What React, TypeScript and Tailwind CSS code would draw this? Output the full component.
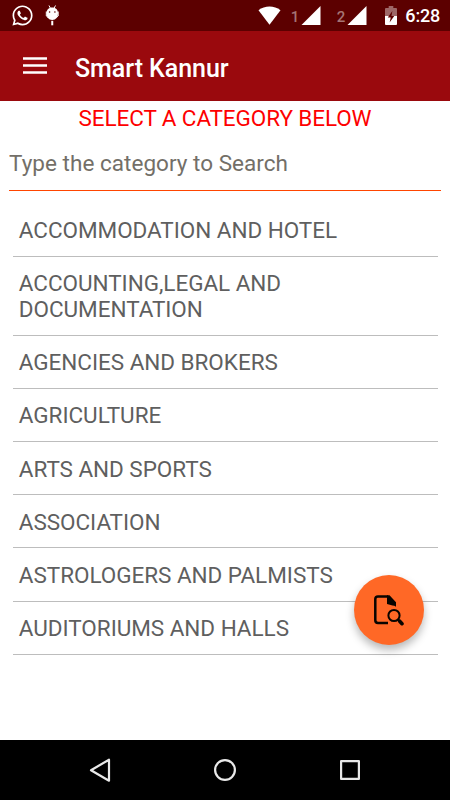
import React, { useState } from 'react';
import { FaWhatsapp } from 'react-icons/fa';

const CATEGORIES = [
  'ACCOMMODATION AND HOTEL',
  'ACCOUNTING,LEGAL AND DOCUMENTATION',
  'AGENCIES AND BROKERS',
  'AGRICULTURE',
  'ARTS AND SPORTS',
  'ASSOCIATION',
  'ASTROLOGERS AND PALMISTS',
  'AUDITORIUMS AND HALLS',
];

function SignalIcon({ sim }: { sim: number }) {
  return (
    <div className="flex h-[19px] items-end">
      <span className="mr-[2px] text-[15px] leading-[16px] font-medium text-[#a57474]">{sim}</span>
      <svg width="20" height="19" viewBox="0 0 20 19" fill="#fff">
        <path d="M19.500 0v19H.5z" />
      </svg>
    </div>
  );
}

function StatusBar() {
  return (
    <div className="flex h-[31px] shrink-0 items-start bg-[#5c0000] text-white">
      <FaWhatsapp className="mt-[4px] ml-[11px] h-[23px] w-[23px]" />
      {/* Debug bug */}
      <svg className="mt-[5px] ml-[11px]" width="16" height="21" viewBox="0 0 16 21">
        <path d="M4 .5l1.300 2.500M10.500 .5L9.200 3" stroke="#fff" strokeWidth="1" fill="none" />
        <path d="M1.300 6.500v4.500l1.700 1.500M13.200 6.500v4.500l-1.700 1.500" stroke="#fff" strokeWidth="1" fill="none" />
        <path d="M1.500 8C1.800 .8 12.700 .8 13 8Q13 14.500 7.250 15Q1.500 14.500 1.500 8z" fill="#fff" />
        <path d="M7.250 15.800v4.500" stroke="#fff" strokeWidth="2" />
        <circle cx="4.600" cy="7" r=".8" fill="#5c0000" />
        <circle cx="9.900" cy="7" r=".8" fill="#5c0000" />
      </svg>
      <div className="mt-[6px] ml-auto flex items-start">
        <svg width="23" height="19" viewBox="0 0 23 19" fill="#fff">
          <path d="M.5 4.200C6.800-.7 16.200-.7 22.500 4.200L11.500 18.700z" />
        </svg>
        <div className="ml-[9.500px]"><SignalIcon sim={1} /></div>
        <div className="ml-[15.500px]"><SignalIcon sim={2} /></div>
        <svg className="ml-[18px]" width="12" height="19" viewBox="0 0 13 19" preserveAspectRatio="none">
          <path d="M4 0h5v2h3q1 0 1 1v8H0V3q0-1 1-1h3z" fill="#9d6666" />
          <path d="M0 10h13v8q0 1-1 1H1q-1 0-1-1z" fill="#fff" />
          <path d="M8 5L3 11.500h3.200L5 16.500l5-6.500H7z" fill="#5c0000" />
        </svg>
        <span className="mr-[10px] ml-[8px] text-[18px] leading-[20px] font-medium tracking-[-0.2px]">6:28</span>
      </div>
    </div>
  );
}

function Toolbar() {
  return (
    <header className="flex h-[70px] shrink-0 items-center bg-[#9a090d] text-white">
      <button type="button" aria-label="Menu" className="-mt-[1px] ml-[23px]">
        <svg className="block" width="24" height="17" viewBox="0 0 24 17" fill="#fff">
          <path d="M0 .2h24v2.500H0zM0 7.200h24v2.500H0zM0 14.200h24v2.500H0z" />
        </svg>
      </button>
      <h1 className="mt-[5px] ml-[28px] text-[25px] leading-[30px] font-medium tracking-[-0.05px]">Smart Kannur</h1>
    </header>
  );
}

function NavBar() {
  return (
    <nav className="flex h-[60px] shrink-0 items-center justify-between bg-black px-[87px]">
      <svg width="25" height="26" viewBox="0 0 25 26" fill="none" stroke="#e9e9e9" strokeWidth="2.200" strokeLinejoin="round">
        <path d="M22 2.700v21L4 13.200z" />
      </svg>
      <svg width="24" height="24" viewBox="0 0 24 24" fill="none" stroke="#e9e9e9" strokeWidth="2.200">
        <circle cx="12" cy="12" r="9.900" />
      </svg>
      <svg width="26" height="26" viewBox="0 0 26 26" fill="none" stroke="#e9e9e9" strokeWidth="2.200" strokeLinejoin="round">
        <rect x="4.100" y="4.100" width="17.800" height="17.800" />
      </svg>
    </nav>
  );
}

export default function App() {
  const [query, setQuery] = useState('');
  const visible = CATEGORIES.filter((c) => c.includes(query.trim().toUpperCase()));

  return (
    <div className="relative flex h-[800px] w-[450px] flex-col overflow-hidden bg-white font-['Roboto',sans-serif]">
      <StatusBar />
      <Toolbar />

      <main className="flex-1 overflow-hidden">
        <h2 className="pt-[4px] text-center text-[22.500px] leading-[26px] tracking-[-0.1px] text-[#fe0000]">
          SELECT A CATEGORY BELOW
        </h2>
        <input
          type="text"
          value={query}
          onChange={(e) => setQuery(e.target.value)}
          placeholder="Type the category to Search"
          className="mx-[9px] mt-[6px] block h-[54px] w-[432px] border-b border-[#ff4500] pb-[2px] text-[22.500px] tracking-[0.03px] text-[#5b5b5b] outline-none placeholder:text-[#736f68]"
        />
        <ul className="mx-[12.500px] mt-[12.600px]">
          {visible.map((name) => (
            <li
              key={name}
              className="border-b border-[#bdbdbd] pt-[13.300px] pr-[90px] pb-[12.500px] pl-[6.300px] text-[22.500px] leading-[26.300px] tracking-[-0.04px] text-[#5f5f5f]"
            >
              {name}
            </li>
          ))}
        </ul>
      </main>

      {/* Floating search button */}
      <button
        type="button"
        aria-label="Search"
        className="absolute top-[575px] left-[354px] flex h-[70px] w-[70px] items-center justify-center rounded-full bg-[#ff6826] shadow-[0_5px_9px_rgba(0,0,0,0.28)]"
      >
        <svg width="30" height="31" viewBox="0 0 30 31" fill="none" stroke="#080400">
          <path d="M14 28H4Q1.300 28 1.300 25.300V4Q1.300 1.400 4 1.400H14" strokeWidth="2.500" />
          <path d="M13 .2h2.500l6.500 7v4.500q-1.500-1.200-3.500-1.200L13 9z" fill="#080400" stroke="none" />
          <circle cx="20" cy="20.500" r="5.600" strokeWidth="2" />
          <path d="M24 24.500l1.500 1.500" strokeWidth="2.200" />
          <path d="M25.700 26.200l2.300 2.500" strokeWidth="3.600" strokeLinecap="round" />
        </svg>
      </button>

      <NavBar />
    </div>
  );
}
